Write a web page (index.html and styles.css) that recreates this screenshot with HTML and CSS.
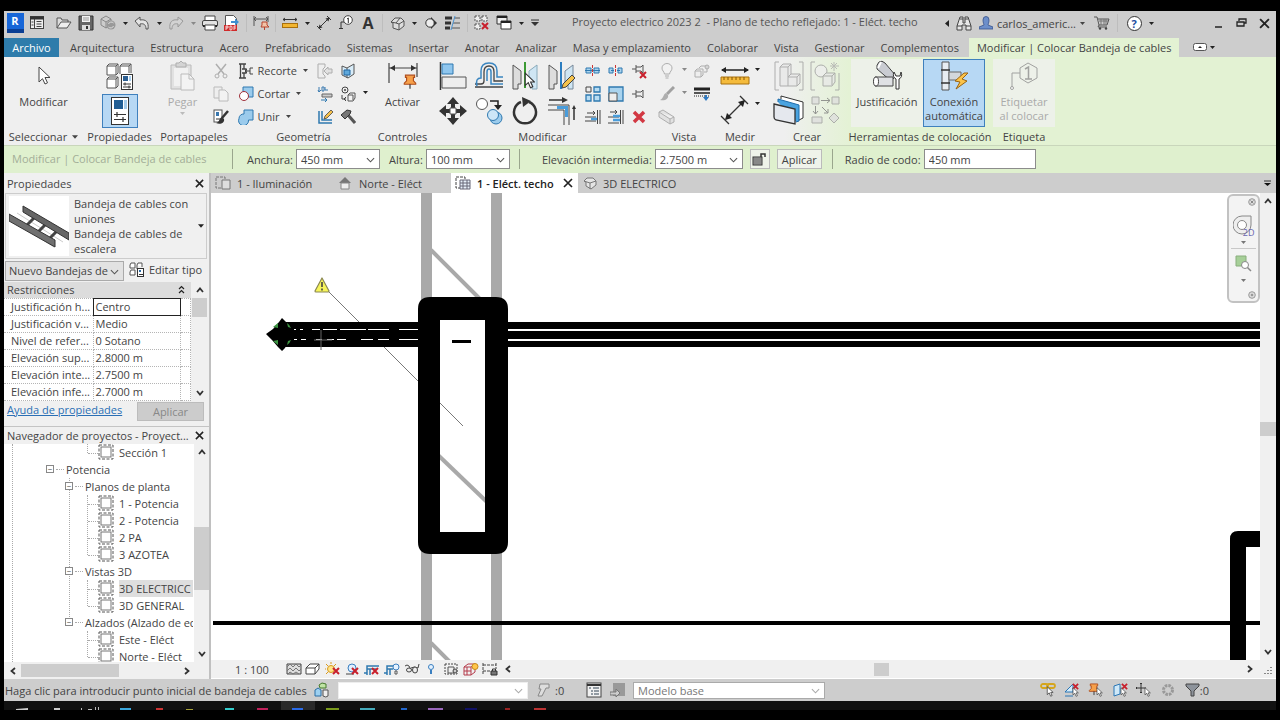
FILE: index.html
```html
<!DOCTYPE html>
<html lang="es">
<head>
<meta charset="utf-8">
<title>Proyecto electrico 2023 2</title>
<link rel="stylesheet" href="styles.css">
</head>
<body>
<svg class="defs" aria-hidden="true">
  <symbol id="caret" viewBox="0 0 7 4"><path d="M0 0h7L3.500 4z" fill="currentColor"/></symbol>
  <symbol id="chev" viewBox="0 0 10 6"><path d="M1 1l4 4 4-4" fill="none" stroke="currentColor" stroke-width="1.200"/></symbol>
  <symbol id="arrow" viewBox="0 0 10 10"><path d="M2 7l3-3.500L8 7" fill="none" stroke="#333" stroke-width="1.800"/></symbol>
  <symbol id="close" viewBox="0 0 10 10"><path d="M1 1l8 8M9 1L1 9" fill="none" stroke="#222" stroke-width="1.700"/></symbol>
  <symbol id="redx" viewBox="0 0 8 8"><path d="M1 1l6 6M7 1L1 7" stroke="#c8202c" stroke-width="2" fill="none"/></symbol>
  <symbol id="cursor" viewBox="0 0 9 14"><path d="M1 1v10l2.500-2.300L5.300 13l1.900-.8-1.800-4H8.500z" fill="#fff" stroke="#333" stroke-width=".9"/></symbol>
  <symbol id="view" viewBox="0 0 16 16"><rect x="1" y="1" width="14" height="14" fill="none" stroke="#555" stroke-dasharray="3 1.500"/><rect x="3" y="3" width="10" height="10" fill="#fff" stroke="#777"/></symbol>
  <symbol id="pin" viewBox="0 0 12 14"><path d="M2 1h8v2H9v3l2 2v1H1V8l2-2V3H2z" fill="#f6a04a" stroke="#b04e1c"/><path d="M6 9v4" stroke="#333"/></symbol>
</svg>
<div class="app">
  <header class="titlebar">
    <nav class="quick" aria-label="Acceso rápido">
      <button class="ib" aria-label="Revit"><span class="logo">R</span></button>
      <button class="ib" aria-label="Inicio"><svg width="14" height="14"><rect x=".5" y=".5" width="13" height="12" fill="#eee" stroke="#444"/><path d="M0 2h14" stroke="#333" stroke-width="3"/><path d="M4.500 3v10M6.500 5.500h5M6.500 8h5M6.500 10.500h5M1.500 6h2M1.500 9h2" stroke="#444"/></svg></button>
      <button class="ib after" aria-label="Abrir"><svg width="16" height="14"><path d="M1 12V2h4l1 2h6v2" fill="#ddd" stroke="#555"/><path d="M1 12l4-6h10l-4 6z" fill="#eee" stroke="#555"/></svg></button>
      <button class="ib" aria-label="Guardar"><svg width="16" height="16"><path d="M1 1h14v14H1z" fill="#666" stroke="#333"/><path d="M4 1h8v6H4z" fill="#f4f4f4"/><path d="M4 10h8v5H4z" fill="#ddd"/><path d="M5 3h6M5 5h6" stroke="#999"/><path d="M9 11v3" stroke="#333" stroke-width="2"/></svg></button>
      <button class="ib" aria-label="Sincronizar"><svg width="17" height="16"><path d="M1 4l5-3 5 3v6l-5 3-5-3zM1 4l5 3 5-3M6 7v6" fill="#ccc" stroke="#888"/><circle cx="11" cy="10" r="4.500" fill="#999"/><path d="M8.500 9a3 3 0 015-1M13.500 11a3 3 0 01-5 1" stroke="#ddd" fill="none"/></svg></button>
      <button class="cb" aria-label="Más"><svg width="5" height="3"><use href="#caret"/></svg></button>
      <button class="ib" aria-label="Deshacer"><svg width="16" height="14"><path d="M1 5l5-4v3c6-1 9 2 8 9h-2c0-4-2-6-6-5v3z" fill="#e4e4e4" stroke="#555"/></svg></button>
      <button class="cb" aria-label="Más"><svg width="5" height="3"><use href="#caret"/></svg></button>
      <button class="ib" aria-label="Rehacer"><svg width="16" height="14"><path d="M15 5l-5-4v3C4 3 1 6 2 13h2c0-4 2-6 6-5v3z" fill="#d2d2d2" stroke="#999"/></svg></button>
      <button class="cb dim" aria-label="Más"><svg width="5" height="3"><use href="#caret"/></svg></button>
      <button class="ib" aria-label="Imprimir"><svg width="16" height="16"><path d="M3 1h10v5H3z" fill="#fff" stroke="#444"/><rect x=".5" y="5.500" width="15" height="6" rx="1.500" fill="#e2e2e2" stroke="#444"/><path d="M1 11h14" stroke="#222" stroke-width="2"/><path d="M3 10h10v5H3z" fill="#fff" stroke="#444"/></svg></button>
      <button class="ib" aria-label="Exportar PDF"><svg width="16" height="16"><path d="M1.500.5h8l3 3v11h-11z" fill="#fff" stroke="#555"/><path d="M7 6h4V3.500L15 7l-4 3.500V8H7z" fill="#3f8fd0"/><path d="M0 10h13v6H0z" fill="#d02a2a"/><path d="M2 15v-4h2v2H2M6 11v4h1.500l.5-1v-2l-.500-1zM10 15v-4h2M10 13h2" stroke="#fff" stroke-width=".8" fill="none"/></svg></button>
      <span class="sep"></span>
      <button class="ib" aria-label="Cota"><svg width="16" height="16"><path d="M1 1v10M15 1v6M1 4h14M3 2L1 4l2 2M13 2l2 2-2 2" stroke="#555" fill="none"/><path d="M9 7h5v3l2 2H8l1-2zM11.500 12v3" fill="#f2c3a8" stroke="#b7422c"/></svg></button>
      <span class="sep"></span>
      <button class="ib" aria-label="Medir"><svg width="16" height="12"><path d="M1 2.500h14M3 1L1 2.500 3 4M13 1l2 1.500L13 4" stroke="#333" fill="none"/><rect x=".5" y="6.500" width="15" height="4" fill="#f2b632" stroke="#a8700e"/></svg></button>
      <button class="cb" aria-label="Más"><svg width="5" height="3"><use href="#caret"/></svg></button>
      <button class="ib" aria-label="Cota alineada"><svg width="16" height="16"><path d="M3 13L13 3M1 11l4 4M11 1l4 4" stroke="#333" fill="none"/><path d="M2.500 13.500l1-4 3 3zM13.500 2.500l-4 1 3 3z" fill="#333"/></svg></button>
      <button class="ib" aria-label="Etiqueta"><svg width="16" height="16"><circle cx="10" cy="5" r="4.300" fill="#fff" stroke="#444"/><path d="M9 4l1.300-1v5M6 7H3v7M1 13.500h4" stroke="#333" fill="none"/></svg></button>
      <button class="ib" aria-label="Texto"><span class="big-a">A</span></button>
      <span class="sep"></span>
      <button class="ib" aria-label="Vista 3D"><svg width="15" height="15"><path d="M1 6l4-4 6 0 3 3v5l-5 4-6-2V7z" fill="#ddd" stroke="#555"/><path d="M1 6l5 1 4-5M6 7l3 1v6M9 8l5-3" fill="none" stroke="#555"/></svg></button>
      <button class="cb" aria-label="Más"><svg width="5" height="3"><use href="#caret"/></svg></button>
      <button class="ib" aria-label="Sección"><svg width="14" height="14"><path d="M7 1l6 6-6 6z" fill="#333"/><circle cx="6" cy="7" r="4.200" fill="#eee" stroke="#333"/></svg></button>
      <button class="ib" aria-label="Líneas finas"><svg width="16" height="14"><path d="M0 2h7M0 7h6M0 12h5" stroke="#333" stroke-width="3"/><path d="M9 2h6M8 7h7M7 12h8" stroke="#555"/><path d="M10 0L6 14" stroke="#4b93d0"/></svg></button>
      <span class="sep"></span>
      <button class="ib" aria-label="Cerrar inactivas"><svg width="16" height="16"><path d="M1 1h5v5H1zM8 1h5v5H8zM1 9h5v5H1z" fill="#eee" stroke="#555" stroke-dasharray="2 1"/><use href="#redx" x="7" y="7" width="8" height="8"/></svg></button>
      <button class="ib" aria-label="Cambiar ventanas"><svg width="16" height="16"><path d="M1 1h10v8H1z" fill="#eee" stroke="#333"/><path d="M1 2h10" stroke="#222" stroke-width="2"/><path d="M5 6h10v8H5z" fill="#fff" stroke="#333"/><path d="M5 7h10" stroke="#222" stroke-width="2"/></svg></button>
      <button class="cb" aria-label="Más"><svg width="5" height="3"><use href="#caret"/></svg></button>
      <button class="wb" aria-label="Personalizar"><svg width="8" height="8"><path d="M0 1h8" stroke="#333"/><path d="M0 3h8L4 7z" fill="#333"/></svg></button>
    </nav>
    <h1 class="title">Proyecto electrico 2023 2 &nbsp;- Plano de techo reflejado: 1 - Eléct. techo</h1>
    <div class="account">
      <button class="cb" aria-label="Contraer"><svg width="4" height="7"><path d="M4 0v7L0 3.500z" fill="#222"/></svg></button>
      <button class="ib" aria-label="Buscar"><svg width="16" height="15"><path d="M4 1h3v6h2V1h3l3 9v4H10V9H6v5H1v-4z" fill="#e8e8e8" stroke="#444"/><path d="M1 10h5M10 10h5M4 3h3M9 3h3" stroke="#444"/></svg></button>
      <button class="user"><svg width="14" height="14"><path d="M4 4a3 3.500 0 016 0c0 3-1 4-1 5l5 2v2H0v-2l5-2c0-1-1-2-1-5z" fill="#6d8fca" stroke="#35508c" stroke-width=".8"/></svg>carlos_americ...<svg width="5" height="3"><use href="#caret"/></svg></button>
      <button class="ib" aria-label="Tienda"><svg width="16" height="14"><path d="M0 1h3l2 8h8l2-6H4M5 9l-1 2h9" fill="none" stroke="#555"/><path d="M5 5h9M7 3v6M10 3v6M12 3v6" stroke="#777"/><circle cx="6" cy="12.500" r="1.200" fill="#444"/><circle cx="12" cy="12.500" r="1.200" fill="#444"/></svg></button>
      <span class="sep help-sep"></span>
      <button class="ib" aria-label="Ayuda"><span class="help">?</span></button>
      <button class="cb" aria-label="Más"><svg width="5" height="3"><use href="#caret"/></svg></button>
    </div>
    <div class="window-buttons">
      <button class="wc" aria-label="Minimizar"><svg width="8" height="11"><path d="M0 9h7" stroke="#222" stroke-width="1.500"/></svg></button>
      <button class="wc" aria-label="Restaurar"><svg width="11" height="10"><path d="M3 3V1h7v4H8M1 4h7v4H1z" fill="none" stroke="#222" stroke-width="1.300"/></svg></button>
      <button class="wc" aria-label="Cerrar"><svg width="11" height="11"><use href="#close"/></svg></button>
    </div>
  </header>

  <nav class="tabs">
    <button class="tab file">Archivo</button><button class="tab">Arquitectura</button><button class="tab">Estructura</button><button class="tab">Acero</button><button class="tab">Prefabricado</button><button class="tab">Sistemas</button><button class="tab">Insertar</button><button class="tab">Anotar</button><button class="tab">Analizar</button><button class="tab">Masa y emplazamiento</button><button class="tab">Colaborar</button><button class="tab">Vista</button><button class="tab">Gestionar</button><button class="tab">Complementos</button><button class="tab context">Modificar | Colocar Bandeja de cables</button>
    <button class="min-ribbon" aria-label="Minimizar cinta"><svg width="24" height="9"><rect x=".5" y=".5" width="13" height="7" rx="2" fill="#fff" stroke="#555"/><path d="M5 5l2-2 2 2z" fill="#222"/><path d="M17 3h5l-2.500 3z" fill="#222"/></svg></button>
  </nav>

  <div class="ribbon">
    <section class="panel">
      <div class="tools"><button class="big"><svg width="22" height="32"><path d="M6 7v15l3.500-3.300L12 24l2.500-1.200L12 17.500h5z" fill="#fff" stroke="#444"/></svg>Modificar</button></div>
      <h2>Seleccionar <svg width="6" height="4"><use href="#caret"/></svg></h2>
    </section>
    <section class="panel">
      <div class="tools two">
        <button class="lg" aria-label="Tipo"><svg width="30" height="30"><path d="M2 4l2-2h9v9l-2 2H2zM2 4h9v9M11 4l2-2M15 4l2-2h9v9M15 12V4h9v7M24 4l2-2M2 17l2-2h9v9l-2 2H2zM2 17h9v9M11 17l2-2" fill="#fff" stroke="#555"/><rect x="16.500" y="12.500" width="11" height="15" fill="#fff" stroke="#333"/><path d="M18 14h5v5h-5z" fill="#2c5f92"/><path d="M24 14h2v5h-2z" fill="#a9d0f0"/><path d="M18 22h8M18 25h8M20 20.500v3M24 23.500v3" stroke="#333"/></svg></button>
        <button class="lg on wide" aria-label="Propiedades"><svg width="20" height="28"><rect x="1.500" y=".5" width="17" height="27" fill="#fff" stroke="#333"/><path d="M4 3h9v9H4z" fill="#1f5d94"/><path d="M14 3h3v9h-3z" fill="#a4cbea"/><path d="M4 17.500h12M4 22.500h12M7 15v5M13 20v5" stroke="#333" stroke-width="1.200"/></svg></button>
      </div>
      <h2>Propiedades</h2>
    </section>
    <section class="panel">
      <div class="tools row">
        <button class="big off"><svg width="28" height="32"><path d="M2 5h20v24H2z" fill="#ddd" stroke="#aaa"/><path d="M5 8h14v18H5z" fill="#f2f2f2"/><path d="M7 3h3l2-2 2 2h3v4H7z" fill="#ccc" stroke="#999"/><path d="M12 14h8l5 5v11H12z" fill="#f5f5f5" stroke="#aaa"/><path d="M20 14v5h5" fill="none" stroke="#aaa"/></svg>Pegar<svg width="5" height="3"><use href="#caret"/></svg></button>
        <div class="col">
          <button class="sm off" aria-label="Cortar"><svg width="16" height="16"><path d="M3 1l8 10M13 1L5 11" stroke="#999" stroke-width="1.500"/><circle cx="4" cy="13" r="2" fill="none" stroke="#999"/><circle cx="12" cy="13" r="2" fill="none" stroke="#999"/></svg></button>
          <button class="sm off" aria-label="Copiar"><svg width="16" height="16"><path d="M1 1h8v11H1z" fill="#eee" stroke="#aaa"/><path d="M6 4h6l3 3v8H6z" fill="#f4f4f4" stroke="#aaa"/></svg></button>
          <button class="sm" aria-label="Igualar tipo"><svg width="16" height="16"><rect x="1" y="1" width="8" height="12" fill="#fff" stroke="#555"/><path d="M3 3h3v4H3z" fill="#3977ae"/><path d="M3 10h5" stroke="#333"/><path d="M15 2L9 9" stroke="#333" stroke-width="2.500"/><path d="M9 8c-3 1-2 5-6 6 4 2 9 0 8-4z" fill="#333"/></svg></button>
        </div>
      </div>
      <h2>Portapapeles</h2>
    </section>
    <section class="panel">
      <div class="tools row">
        <div class="col labels">
          <button class="line"><svg width="16" height="16"><path d="M1 1h7M1 15h7M2.500 1v14M6 1v5M6 10v5M4 6h4v4H4" stroke="#444" fill="none" stroke-width="1.300"/><path d="M15 5h-3v6h3M12 8H7M9 6L7 8l2 2" stroke="#444" fill="none"/></svg>Recorte <svg class="dd" width="5" height="3"><use href="#caret"/></svg></button>
          <button class="line"><svg width="16" height="16"><path d="M5 1h10v10H5z" fill="#9bcbec" stroke="#2f79b0"/><circle cx="6" cy="10" r="4.500" fill="#fff" stroke="#a0303a"/></svg>Cortar <svg class="dd" width="5" height="3"><use href="#caret"/></svg></button>
          <button class="line"><svg width="16" height="16"><path d="M6 1h9v10h-4.500A5 5 0 111 9.500 4.500 4.500 0 016 5z" fill="#9bcbec" stroke="#2f79b0"/></svg>Unir <svg class="dd" width="5" height="3"><use href="#caret"/></svg></button>
        </div>
        <div class="col">
          <button class="sm off" aria-label="Empalme"><svg width="16" height="16"><path d="M1 1h7v3l-2 2v5l2 2v2H1z" fill="#eee" stroke="#999"/><path d="M15 6h-4V4L7 8l4 4v-2h4z" fill="#ddd" stroke="#999"/></svg></button>
          <button class="sm" aria-label="Cubierta"><svg width="16" height="16"><path d="M2 1v5M8 1v3h3M1 4l1 2 2-2M5 1h2v4H5z" stroke="#3b7bb0" fill="none"/><path d="M5 8h10v3H5z" fill="#ccc" stroke="#666"/><path d="M4 14h6M8 12l2 2-2 2" stroke="#2f79b0" fill="none"/></svg></button>
          <button class="sm" aria-label="Uniones"><svg width="16" height="16"><path d="M2 2v12h13M5 2v9h10" stroke="#2f79b0" stroke-width="1.500" fill="none"/><path d="M7 10l1-3 6-6 2 2-6 6z" fill="#f5c04a" stroke="#444" stroke-width=".8"/></svg></button>
        </div>
        <div class="col">
          <button class="sm" aria-label="Cara"><svg width="15" height="16"><path d="M1 3l5 2 7-4v10l-6 4-6-3z" fill="#d8ecf8" stroke="#555"/><path d="M6 5v10" stroke="#555"/><path d="M3 7h6v5H3z" fill="#5ea8dc" stroke="#2267a0"/></svg></button>
          <button class="sm" aria-label="Pintar"><svg width="16" height="16"><circle cx="5" cy="4" r="3" fill="#eee" stroke="#444"/><circle cx="5" cy="4" r="1" fill="#444"/><path d="M2 9v4h4M6 11l-2 2 2 2" stroke="#444" fill="none"/><path d="M8 9l2-2h5v5l-2 3H8zM8 9h5v5" fill="#f4f4f4" stroke="#555"/></svg></button>
          <button class="sm" aria-label="Demoler"><svg width="16" height="16"><path d="M8 6l7 8" stroke="#555" stroke-width="3"/><path d="M1 6l6-5 4 1-1 3-5 5z" fill="#777" stroke="#333"/></svg></button>
        </div>
        <div class="col slim"><span></span><button class="cb" aria-label="Más"><svg width="5" height="3"><use href="#caret"/></svg></button><span></span></div>
      </div>
      <h2>Geometría</h2>
    </section>
    <section class="panel">
      <div class="tools"><button class="big"><svg width="32" height="32"><path d="M2 3v20M30 3v14M2 8h28" stroke="#444" stroke-width="1.200"/><path d="M3 8l5-3v6zM29 8l-5-3v6z" fill="#333"/><use href="#pin" x="16" y="14" width="14" height="16"/></svg>Activar</button></div>
      <h2>Controles</h2>
    </section>
    <section class="panel">
      <div class="tools row">
        <div class="grid4">
          <button class="lg" aria-label="Alinear"><svg width="30" height="30"><path d="M2.500 1v28" stroke="#333" stroke-width="1.500"/><path d="M4 3h11v10H4z" fill="#8fc6ee" stroke="#2f79b0"/><path d="M4 16h24v11H4z" fill="#eee" stroke="#555"/></svg></button>
          <button class="lg" aria-label="Desfasar"><svg width="30" height="30"><path d="M1 26h28M1 23h6q3 0 3-3v-9q0-6 5-6t5 6v9h9" fill="none" stroke="#444" stroke-width="1.300"/><path d="M3 25q-2-8 4-8V10q0-8 8-8t8 8v6h6M29 23H17v-12q0-3-2-3t-2 3v9" fill="none" stroke="#3b86c0" stroke-width="1.500"/></svg></button>
          <button class="lg" aria-label="Simetría eje"><svg width="30" height="30"><path d="M3 4l8 6v13h-3v5H3z" fill="#ddd" stroke="#555"/><path d="M27 4l-8 6v13h3v5h5z" fill="#cfe6f4" stroke="#8ab"/><path d="M15 1v26" stroke="#3c9a34" stroke-width="2"/><use href="#cursor" x="14" y="11" width="11" height="17"/></svg></button>
          <button class="lg" aria-label="Simetría dibujar"><svg width="30" height="30"><path d="M3 4l8 6v13h-3v5H3z" fill="#ddd" stroke="#555"/><path d="M27 4l-8 6v13h3v5h5z" fill="#cfe6f4" stroke="#789"/><path d="M15 1v27" stroke="#2b7dc0" stroke-width="2"/><path d="M16 27l1-4 9-9 3 3-9 9z" fill="#f6c34b" stroke="#444"/></svg></button>
          <button class="lg" aria-label="Desplazar"><svg width="30" height="30"><path d="M15 1l6 7h-4v4h-4V8H9zM15 29l6-7h-4v-4h-4v4H9zM1 15l7-6v4h4v4H8v4zM29 15l-7-6v4h-4v4h4v4z" fill="#333"/><path d="M12 12h6v6h-6z" fill="#fff" stroke="#555"/></svg></button>
          <button class="lg" aria-label="Copiar"><svg width="30" height="30"><circle cx="8" cy="8" r="5.500" fill="#fff" stroke="#555"/><path d="M16 5h8v5" fill="none" stroke="#222" stroke-width="1.500"/><path d="M20 9h8l-4 5z" fill="#222"/><circle cx="22" cy="22" r="6" fill="#9bcbec" stroke="#2f79b0"/><circle cx="19" cy="19" r="5.500" fill="#cde6f7" stroke="#2f79b0"/></svg></button>
          <button class="lg" aria-label="Rotar"><svg width="30" height="30"><path d="M19 6a11 11 0 11-8 0" fill="none" stroke="#333" stroke-width="2.500"/><path d="M12 1l9 4-8 6z" fill="#333"/></svg></button>
          <button class="lg" aria-label="Recortar"><svg width="30" height="30"><path d="M3 4h16" stroke="#333" stroke-width="1.500"/><path d="M16 1l6 3-6 3zM28 9l2 4h-4z" fill="#333"/><path d="M2 9h21v20M2 14h16v15" stroke="#444" fill="none"/><path d="M11 11.500h9.500V21" stroke="#4a9ddb" stroke-width="3" fill="none"/><path d="M28 12v12" stroke="#333" stroke-width="1.500"/></svg></button>
        </div>
        <div class="col">
          <button class="sm" aria-label="Dividir"><svg width="16" height="16"><path d="M1 5h5v5H1zM9 5h5v5H9z" fill="#a9d3ee" stroke="#2f79b0"/><path d="M0 7.500h15" stroke="#2f79b0"/><path d="M7.500 2v12" stroke="#c33" stroke-dasharray="3 1"/></svg></button>
          <button class="sm" aria-label="Matriz"><svg width="16" height="16"><path d="M1 1h5v5H1z" fill="#eee" stroke="#444"/><path d="M9 1h6v5H9zM1 9h5v6H1zM9 9h6v6H9z" fill="#b7dcf3" stroke="#2f79b0" stroke-width="1.300"/></svg></button>
          <button class="sm" aria-label="Extender"><svg width="16" height="16"><path d="M2 4h8M8 2l2 2-2 2M0 8h11M0 12h11M12.500 1v14M15 1v14" stroke="#444" fill="none"/><path d="M6 10h6" stroke="#4a9ddb" stroke-width="2.500"/></svg></button>
        </div>
        <div class="col">
          <button class="sm" aria-label="Dividir con separación"><svg width="16" height="16"><path d="M1 5h4v5H1zM10 5h4v5h-4z" fill="#a9d3ee" stroke="#2f79b0"/><path d="M3 7.500h3M9 7.500h3" stroke="#2f79b0"/><path d="M7.500 2v12" stroke="#c33" stroke-dasharray="3 1"/></svg></button>
          <button class="sm" aria-label="Escala"><svg width="16" height="16"><path d="M1 1h14v14H1z" fill="#a9d3ee" stroke="#2f79b0" stroke-width="1.300"/><path d="M1 7h8v8H1z" fill="#eee" stroke="#555"/></svg></button>
          <button class="sm" aria-label="Extender varios"><svg width="16" height="16"><path d="M2 3h7M7 1l2 2-2 2M0 8h11M0 14h11M12.500 1v14M15 1v14" stroke="#444" fill="none"/><path d="M5 7h7M5 11h7" stroke="#4a9ddb" stroke-width="2.500"/></svg></button>
        </div>
        <div class="col">
          <button class="sm" aria-label="Desbloquear"><svg width="16" height="16"><path d="M1 6h4M5 2v8M5 4h5l2-2v8l-2-2H5" fill="#eee" stroke="#555"/><use href="#redx" x="8" y="8" width="8" height="8"/></svg></button>
          <button class="sm" aria-label="Bloquear"><svg width="16" height="16"><path d="M1 8h4M5 4v8M5 6h5l2-2v8l-2-2H5" fill="#eee" stroke="#555"/></svg></button>
          <button class="sm" aria-label="Suprimir"><svg width="14" height="14"><path d="M2 2l10 10M12 2L2 12" stroke="#d23843" stroke-width="3.500"/></svg></button>
        </div>
      </div>
      <h2>Modificar</h2>
    </section>
    <section class="panel">
      <div class="tools row">
        <div class="col">
          <button class="sm off" aria-label="Ocultar"><svg width="16" height="16"><path d="M5.500 11C5 8 3 8 3 5a5 4.500 0 0110 0c0 3-2 3-2.500 6zM6 13h4M6.500 15h3" fill="#f4f4f4" stroke="#999"/></svg></button>
          <button class="sm off" aria-label="Modificar gráficos"><svg width="16" height="16"><path d="M15 1L8 8" stroke="#888" stroke-width="3"/><path d="M7 7c-3 1-2 5-6 7 5 1 9-1 8-5z" fill="#999"/></svg></button>
          <button class="sm off" aria-label="Caja de sección"><svg width="17" height="16"><path d="M1 3l4-2 11 7v5l-4 2L1 8zM1 3l11 7 4-2M12 10v5" fill="#ddd" stroke="#999"/></svg></button>
        </div>
        <div class="col slim off"><button class="cb" aria-label="Más"><svg width="5" height="3"><use href="#caret"/></svg></button><button class="cb" aria-label="Más"><svg width="5" height="3"><use href="#caret"/></svg></button><span></span></div>
        <div class="col">
          <button class="sm off" aria-label="Aislar"><svg width="16" height="16"><path d="M1 8l2-2h6v6l-2 2H1zM1 8h6v6M5 5l2-2h6v6h-3" fill="#eee" stroke="#999"/><circle cx="13" cy="4" r="2" fill="#ccc" stroke="#999"/></svg></button>
          <button class="sm" aria-label="Trabajo de línea"><svg width="16" height="14"><path d="M0 2h16" stroke="#222" stroke-width="3"/><path d="M0 6h16" stroke="#222" stroke-width="1.500"/><path d="M0 9h16" stroke="#222" stroke-dasharray="1 1"/><path d="M11 8h2v2h2l-3 4-3-4h2z" fill="#2f79c0"/></svg></button><span></span>
        </div>
      </div>
      <h2>Vista</h2>
    </section>
    <section class="panel">
      <div class="tools pairs">
        <button class="lg" aria-label="Medir"><svg width="30" height="24"><path d="M2 6h26" stroke="#222" stroke-width="1.500"/><path d="M1 6l5-3v6zM29 6l-5-3v6z" fill="#222"/><path d="M1 13h28v7H1z" fill="#f5bb3c" stroke="#a8700e"/><path d="M4 13v3M8 13v3M12 13v3M16 13v3M20 13v3M24 13v3" stroke="#875600"/></svg></button><button class="cb" aria-label="Más"><svg width="5" height="3"><use href="#caret"/></svg></button>
        <button class="lg" aria-label="Cota"><svg width="30" height="30"><path d="M6 24L24 6M1 21l8 8M20 1l8 8" stroke="#333" stroke-width="1.300"/><path d="M5 25l2-7 5 5zM25 5l-7 2 5 5z" fill="#222"/></svg></button><button class="cb" aria-label="Más"><svg width="5" height="3"><use href="#caret"/></svg></button>
      </div>
      <h2>Medir</h2>
    </section>
    <section class="panel">
      <div class="tools grid2">
        <button class="lg off" aria-label="Crear grupo"><svg width="30" height="30"><path d="M5 1H1v28h4M25 1h4v28h-4" stroke="#999" fill="none"/><path d="M6 6l3-3h8v10h9v9l-3 3H6zM6 6h8v19M14 6l3-3M14 16l3-3M14 16h9v9M23 16l3-3" fill="#e8e8e8" stroke="#999"/></svg></button>
        <button class="lg off" aria-label="Crear similar"><svg width="30" height="30"><path d="M5 1H1v28h4M25 29h4V12" stroke="#999" fill="none"/><circle cx="11" cy="10" r="6" fill="#eee" stroke="#999"/><path d="M13 15l3-3h9v9l-3 4h-9zM13 15h9v9M22 15l3-3" fill="#e8e8e8" stroke="#999"/><path d="M24 1v9M20 5h9M21 2l6 6M27 2l-6 6" stroke="#aaa"/></svg></button>
        <button class="lg" aria-label="Crear conjunto"><svg width="32" height="30"><path d="M8 4V1l22 6v16l-4 2" fill="#fff" stroke="#333"/><path d="M5 7V4l21 6v16l-3 1" fill="#4aa3e0" stroke="#1f6cab"/><path d="M1 9l21 5v15L3 25q-2-1-2-3z" fill="#e5e8ee" stroke="#333" stroke-width="1.300"/></svg></button>
        <button class="lg off" aria-label="Crear piezas"><svg width="30" height="30"><path d="M2 2h7v7H2zM22 2h7v7h-7zM2 22h10v6H2zM24 18l5 5-5 5-5-5z" fill="#ddd" stroke="#999"/><path d="M11 5.500h9M17 3l3 2.500L17 8M5.500 11v8M3 16l2.500 3L8 16M12 12l6 6M18 14v4h-4" stroke="#777" fill="none"/></svg></button>
      </div>
      <h2>Crear</h2>
    </section>
    <section class="panel green">
      <div class="tools row">
        <button class="big pale"><svg width="32" height="32"><path d="M8 2q3-2 6 1l11 13-5 5L6 9q-1-4 2-7z" fill="#c9ccd2" stroke="#444"/><path d="M10 2L7 8" stroke="#fff" stroke-width="2"/><path d="M4 17q-3 4 0 9h18v-9z" fill="#dfe1e4" stroke="#444"/><ellipse cx="5" cy="21.500" rx="2.500" ry="4.500" fill="#fff" stroke="#444"/><path d="M23 12q-2 5 2 7v10h3V19q4-2 2-7l-1 4h-4z" fill="#fff" stroke="#333"/></svg>Justificación</button>
        <button class="big on"><svg width="32" height="32"><path d="M4 2h7v28H4z" fill="#e8edf2" stroke="#555"/><path d="M11 12h12v8H11z" fill="#d2d7dd" stroke="#666"/><path d="M3 10h9M3 23h9" stroke="#333" stroke-width="1.500"/><path d="M26 13l-9 8 5 1-4 7 11-8-5-2 6-6z" fill="#fbc34a" stroke="#9a6512"/></svg>Conexión automática</button>
      </div>
      <h2>Herramientas de colocación</h2>
    </section>
    <section class="panel green">
      <div class="tools"><button class="big off pale"><svg width="32" height="32"><path d="M12 8l8-5 9 5v10l-9 5-8-5zM12 13H4v15" fill="none" stroke="#888"/><circle cx="4" cy="28" r="1.500" fill="#fff" stroke="#888"/><path d="M17 9l3.500-2v12M17 19h7" fill="none" stroke="#888" stroke-width="1.500"/></svg><span>Etiquetar<br>al colocar</span></button></div>
      <h2>Etiqueta</h2>
    </section>
  </div>

  <div class="options">
    <span class="mode">Modificar | Colocar Bandeja de cables</span>
    <label for="w">Anchura:</label><span class="pick w84"><select id="w"><option>450 mm</option></select><svg width="9" height="6"><use href="#chev"/></svg></span>
    <label class="h" for="h">Altura:</label><span class="pick w84"><select id="h"><option>100 mm</option></select><svg width="9" height="6"><use href="#chev"/></svg></span>
    <span class="rule"></span>
    <label for="e">Elevación intermedia:</label><span class="pick w92"><select id="e"><option>2.7500 m</option></select><svg width="9" height="6"><use href="#chev"/></svg></span>
    <button class="obtn lock" aria-label="Bloquear elevación"><svg width="15" height="16"><rect x="1" y="6" width="9" height="8" fill="#aaa" stroke="#333"/><path d="M1 8h9M1 10h9M1 12h9" stroke="#666"/><path d="M9 6V3h4v3" fill="none" stroke="#333" stroke-width="1.500"/></svg></button>
    <button class="obtn apply">Aplicar</button>
    <span class="rule short"></span>
    <label for="r">Radio de codo:</label><input id="r" value="450 mm">
  </div>

  <main class="work">
    <aside class="side">
      <div class="phead"><h3>Propiedades</h3><button class="x" aria-label="Cerrar"><svg width="9" height="9"><use href="#close"/></svg></button></div>
      <button class="type">
        <svg width="60" height="60"><path fill="#fff" d="M0 0h60v60H0z"/><path d="M8 17l46 29M3 24l42 27" stroke="#ccc"/><path d="M28 19l-11 11M39 26l-11 11M50 33L39 44" stroke="#444" stroke-width="3"/><path d="M14 10l46 27v7L14 16z" fill="#666" stroke="#333"/><path d="M0 18l46 26v7L0 25z" fill="#707070" stroke="#333"/></svg>
        <span>Bandeja de cables con uniones<br>Bandeja de cables de escalera</span>
        <svg class="c" width="6" height="4"><use href="#caret"/></svg>
      </button>
      <div class="edit"><span class="pick gray"><select aria-label="Filtro"><option>Nuevo Bandejas de</option></select><svg width="9" height="6"><use href="#chev"/></svg></span>
        <button class="edit-type"><svg width="16" height="16"><path d="M1 3l1-2h4v5H1zM8 3l1-2h4v4M1 10l1-2h4v5H1zM8 3v4" fill="#fff" stroke="#555"/><rect x="8.500" y="6.500" width="6" height="8" fill="#fff" stroke="#333"/><path d="M10 8h2v2h-2z" fill="#2b6ca8"/><path d="M10 12.500h4" stroke="#333"/></svg>Editar tipo</button></div>
      <div class="props">
        <table>
          <colgroup><col class="c-name"><col class="c-value"><col></colgroup>
          <thead><tr><th colspan="3">Restricciones<svg width="7" height="9"><path d="M1 4l2.500-2.500L6 4M1 8l2.500-2.500L6 8" fill="none" stroke="#222" stroke-width="1.200"/></svg></th></tr></thead>
          <tbody>
            <tr><td>Justificación h...</td><td class="cur">Centro</td><td></td></tr>
            <tr><td>Justificación v...</td><td>Medio</td><td></td></tr>
            <tr><td>Nivel de refer...</td><td>0 Sotano</td><td></td></tr>
            <tr><td>Elevación sup...</td><td>2.8000 m</td><td></td></tr>
            <tr><td>Elevación inte...</td><td>2.7500 m</td><td></td></tr>
            <tr><td>Elevación infe...</td><td>2.7000 m</td><td></td></tr>
          </tbody>
        </table>
        <div class="vs"><svg width="10" height="10"><use href="#arrow"/></svg><i class="t1"></i><svg class="down" width="10" height="10"><use href="#arrow"/></svg></div>
      </div>
      <div class="foot"><a href="#ayuda">Ayuda de propiedades</a><button disabled>Aplicar</button></div>
      <div class="phead nav"><h3>Navegador de proyectos - Proyect...</h3><button class="x" aria-label="Cerrar"><svg width="9" height="9"><use href="#close"/></svg></button></div>
      <div class="browser">
        <div class="tree">
          <ul class="leafs first"><li><svg width="16" height="16"><use href="#view"/></svg>Sección 1</li></ul>
          <div class="node n1"><i>−</i>Potencia</div>
          <div class="groups">
            <div class="node n2"><i>−</i>Planos de planta</div>
            <ul class="leafs"><li><svg width="16" height="16"><use href="#view"/></svg>1 - Potencia</li><li><svg width="16" height="16"><use href="#view"/></svg>2 - Potencia</li><li><svg width="16" height="16"><use href="#view"/></svg>2 PA</li><li><svg width="16" height="16"><use href="#view"/></svg>3 AZOTEA</li></ul>
            <div class="node n2"><i>−</i>Vistas 3D</div>
            <ul class="leafs"><li><svg width="16" height="16"><use href="#view"/></svg><b>3D ELECTRICC</b></li><li><svg width="16" height="16"><use href="#view"/></svg>3D GENERAL</li></ul>
            <div class="node n2"><i>−</i>Alzados (Alzado de ec</div>
            <ul class="leafs"><li><svg width="16" height="16"><use href="#view"/></svg>Este - Eléct</li><li><svg width="16" height="16"><use href="#view"/></svg>Norte - Eléct</li></ul>
          </div>
        </div>
        <div class="vs"><svg width="10" height="10"><use href="#arrow"/></svg><i class="t2"></i><svg class="down" width="10" height="10"><use href="#arrow"/></svg></div>
      </div>
      <div class="hs"><svg class="left" width="10" height="10"><use href="#arrow"/></svg><i></i><svg class="right" width="10" height="10"><use href="#arrow"/></svg></div>
    </aside>

    <section class="views">
      <nav class="vtabs">
        <button class="vtab"><svg width="16" height="14"><path d="M1 1h9v11H1z" fill="none" stroke="#777" stroke-dasharray="3 1"/><path d="M7 4h8v9H7z" fill="#ddd" stroke="#777"/></svg>1 - Iluminación</button>
        <button class="vtab two"><svg width="14" height="14"><path d="M7 1l6 6H1z" fill="#777"/><path d="M3 7h8v6H3z" fill="#eee" stroke="#888"/></svg>Norte - Eléct</button>
        <button class="vtab active"><svg width="16" height="14"><path d="M1 1h9v11H1z" fill="#fff" stroke="#444" stroke-dasharray="3 1"/><path d="M5 4h10v9H5zM5 7h10M5 10h10M8 4v9M12 4v9" fill="#e7f1fa" stroke="#667"/></svg>1 - Eléct. techo<svg class="xx" width="10" height="10"><use href="#close"/></svg></button>
        <button class="vtab four"><svg width="14" height="14"><path d="M1 5l3-3h6l3 3v4l-5 4-5-3V6z" fill="#e4e4e4" stroke="#777"/><path d="M1 5l6 2 6-2M7 7v6" fill="none" stroke="#777"/></svg>3D ELECTRICO</button>
        <button class="more" aria-label="Lista de vistas"><svg width="8" height="7"><path d="M0 1h7" stroke="#333"/><path d="M0 3h7L3.500 6z" fill="#111"/></svg></button>
      </nav>
      <div class="stage">
        <div class="canvas">
          <svg class="drawing" role="img" aria-label="Plano de techo">
            <g transform="translate(-211 -193)">
              <path d="M421 193h11v107h-11zM491 193h11v107h-11zM421 550h11v900h-11zM491 550h11v900h-11z" fill="#a9a9a9"/>
              <path d="M431 250l49 49M431 643l30 30" stroke="#a9a9a9" stroke-width="4"/>
              <path d="M328 291l100 100" stroke="#555" stroke-width=".8"/>
              <path d="M285 322h2000v7H285zM285 331h2000v8H285zM285 341h2000v6H285z"/>
              <path d="M285 322h133v7H285zM285 330h133v9H285zM285 340h133v7H285z"/>
              <path d="M285 328h9v13h-9zM296 328h4v4h-4zM303 329h9v3h-9zM320 328h3v4h-3zM337 328h3v4h-3zM366 328h2v4h-2zM389 327h10v16h-10zM297 338h4v4h-4zM306 338h10v4h-10zM322 338h5v4h-5zM334 338h3v4h-3zM346 338h15v2h-15zM373 338h5v2h-5z"/>
              <path d="M266 334l7-5 6-7 3-4 4 4 2 4v16l-3 6-3 3-4-4-6-7z"/>
              <path d="M273 327l5-4v5zM273 341l5 4v-5zM287 323q3 2 4 5l-3-1zM287 345q3-2 4-5l-3 1z" fill="#3c9442"/>
              <path d="M321 330v20M314 340h18" stroke="#666"/>
              <path d="M438 318h49v216h-49z" fill="#fff"/>
              <path d="M438 455l50 48" stroke="#a9a9a9" stroke-width="4"/>
              <path d="M438 401l25 25" stroke="#555" stroke-width=".8"/>
              <path d="M430 297h66q12 0 12 12v233q0 12-12 12h-66q-12 0-12-12V309q0-12 12-12zM440 320v212h45V320z" fill-rule="evenodd"/>
              <path d="M452 340h19v3h-19z"/>
              <path d="M213 621h2000v4H213z"/>
              <path d="M1238 531h900v16h-892v1000h-16V539q0-8 8-8z"/>
              <path d="M322 278l7 13q0 1-1 1h-12q-1 0-1-1z" fill="#f6f45a" stroke="#8a8750" stroke-width="1.200" stroke-linejoin="round"/>
              <path d="M322 282v5M322 288.500v2" stroke="#444" stroke-width="1.600"/>
            </g>
          </svg>
          <div class="navbar">
            <svg class="nx" width="8" height="8"><circle cx="4" cy="4" r="3.300" fill="#ddd" stroke="#999"/><path d="M2.500 2.500l3 3M5.500 2.500l-3 3" stroke="#888"/></svg>
            <button class="wheel" aria-label="Rueda 2D"><svg width="22" height="22"><path d="M9 1h9v9a9 9 0 11-9-9z" fill="#eee" stroke="#888"/><circle cx="9" cy="10" r="4.500" fill="#fff" stroke="#888"/></svg><span>2D</span></button>
            <svg class="nc" width="5" height="3"><use href="#caret"/></svg>
            <button class="zoom" aria-label="Zoom"><svg width="17" height="17"><path d="M1 1h10v10H1z" fill="#a6cf98" stroke="#88ad7c"/><circle cx="10" cy="10" r="3.500" fill="#fff" stroke="#888"/><path d="M12.500 12.500L16 16" stroke="#888" stroke-width="1.500"/></svg></button>
            <svg class="nc" width="5" height="3"><use href="#caret"/></svg>
            <svg class="nx end" width="8" height="8"><circle cx="4" cy="4" r="3.300" fill="#ddd" stroke="#999"/><circle cx="4" cy="4" r="1.300" fill="#999"/></svg>
          </div>
        </div>
        <div class="vs wide"><svg width="10" height="10"><use href="#arrow"/></svg><i class="t3"></i><svg class="down" width="10" height="10"><use href="#arrow"/></svg></div>
      </div>
      <div class="viewbar">
        <button class="scale">1 : 100</button>
        <div class="vicons">
          <button class="ib" aria-label="Detalle"><svg width="16" height="14"><path d="M1 2h14v10H1z" fill="#ddd" stroke="#444"/><path d="M1 5l3-3 3 3 3-3 3 3 2-2M1 9l3-3 3 3 3-3 3 3 2-2M2 12l2-2 3 2 3-2 3 2" fill="none" stroke="#777"/></svg></button>
          <button class="ib" aria-label="Estilo visual"><svg width="16" height="14"><path d="M1 6l4-4h9v5l-4 5H1zM1 6h9v6M10 6l4-4" fill="#fff" stroke="#444"/></svg></button>
          <button class="ib" aria-label="Sol"><svg width="16" height="14"><circle cx="6" cy="7" r="3.500" fill="#ffe48a" stroke="#d99a1c"/><path d="M6 0v2M0 7h1M1 2l2 2M11 2L9 4M1 12l2-2" stroke="#d99a1c"/><use href="#redx" x="7" y="5" width="8" height="8"/></svg></button>
          <button class="ib" aria-label="Sombras"><svg width="16" height="14"><circle cx="7" cy="6" r="4" fill="#dfefff" stroke="#3a7fc0"/><path d="M1 12h8" stroke="#444"/><use href="#redx" x="6" y="5" width="8" height="8"/></svg></button>
          <button class="ib" aria-label="Recorte"><svg width="16" height="14"><path d="M0 11h3M3 13V4h12M3 7h9M6 7v6" stroke="#2f79b0" stroke-width="1.500" fill="none"/><use href="#redx" x="7" y="5" width="8" height="8"/></svg></button>
          <button class="ib" aria-label="Región"><svg width="16" height="14"><path d="M0 11h3M3 13V4h7M3 7h6M6 7v6" stroke="#2f79b0" stroke-width="1.500" fill="none"/><circle cx="12" cy="5" r="3" fill="#e5f2ff" stroke="#3a7fc0"/><path d="M11 9h2v3h-2z" stroke="#555" fill="#fff"/></svg></button>
          <button class="ib" aria-label="Ocultar temporal"><svg width="16" height="12"><path d="M1 3q2-2 4 0l2 4M7 5q3-2 7 0M14 5l1-4" fill="none" stroke="#444"/><ellipse cx="5" cy="7" rx="2.500" ry="2" fill="#eee" stroke="#444"/><ellipse cx="11" cy="7" rx="2.500" ry="3" fill="#eee" stroke="#444"/></svg></button>
          <button class="ib" aria-label="Mostrar ocultos"><svg width="8" height="12"><circle cx="4" cy="4" r="2.500" fill="#e5f2ff" stroke="#3a7fc0"/><path d="M3 7h2v4H3z" fill="#3a7fc0"/></svg></button>
          <button class="ib" aria-label="Plantilla"><svg width="14" height="14"><path d="M1 2h12v10H1z" fill="none" stroke="#444" stroke-dasharray="2 1"/><path d="M4 5h6v6H4z" fill="#eee" stroke="#555"/><circle cx="11" cy="9" r="2" fill="#ccc" stroke="#444"/></svg></button>
          <button class="ib" aria-label="Modelo analítico"><svg width="16" height="14"><path d="M1 5l4-3h7v8l-4 3H1zM1 5h7v8M4 5v8M1 9h7M8 5l4-3" fill="none" stroke="#b43a4a"/><circle cx="12" cy="4.500" r="3" fill="#ffc64a" stroke="#c98a1a"/></svg></button>
          <button class="ib" aria-label="Restricciones"><svg width="16" height="14"><path d="M1 1v12M14 1v6M1 3h13M1 9h7" stroke="#444" stroke-dasharray="3 1"/><path d="M9 9h6v4H9z" fill="#777" stroke="#333"/><path d="M10.500 9V7h3v2" fill="none" stroke="#333"/></svg></button>
        </div>
        <div class="hs grow"><svg class="left" width="10" height="10"><use href="#arrow"/></svg><i></i><svg class="right" width="10" height="10"><use href="#arrow"/></svg></div>
        <svg class="grip" width="10" height="10"><path d="M7 1h2v1H7zM4 4h2v1H4zM7 4h2v1H7zM1 7h2v1H1zM4 7h2v1H4zM7 7h2v1H7z" fill="#888"/></svg>
      </div>
    </section>
  </main>

  <footer class="status">
    <span class="hint">Haga clic para introducir punto inicial de bandeja de cables</span>
    <svg class="ws" width="16" height="16"><path d="M1 8l3-2 3 2v6H1z" fill="#9dd0f0" stroke="#2b6fa5"/><path d="M5 3l3-2 4 1v4H6z" fill="#bfe3a4" stroke="#477a2e"/><path d="M9 8h5v6q-2 2-5 0z" fill="#eee" stroke="#555"/></svg>
    <span class="pick s1"><select aria-label="Subproyecto"><option></option></select><svg width="9" height="6"><use href="#chev"/></svg></span>
    <span class="edits"><svg width="14" height="14"><path d="M3 1h9v4H9L5 13H1l3-7H2z" fill="#ddd" stroke="#888"/></svg>:0</span>
    <button class="ib" aria-label="Opciones de diseño"><svg width="16" height="16"><rect x="1" y="1" width="14" height="14" fill="#f1f1f1" stroke="#444"/><path d="M1 3h14" stroke="#333" stroke-width="2"/><path d="M3 6h2M7 6h6M5 9h2M8 9h5M5 12h2M8 12h5" stroke="#345"/></svg></button>
    <button class="ib" aria-label="Añadir"><svg width="16" height="16"><path d="M3 1h12v13H3z" fill="#999"/><path d="M0 10h6V7l4 4-4 4v-2H0z" fill="#ccc" stroke="#777"/></svg></button>
    <span class="pick s2"><select aria-label="Modelo"><option>Modelo base</option></select><svg width="9" height="6"><use href="#chev"/></svg></span>
    <div class="sel">
      <button class="ib" aria-label="Vínculos"><svg width="16" height="16"><rect x="1" y="2" width="7" height="4" rx="2" fill="none" stroke="#d5a51c" stroke-width="1.800"/><rect x="7" y="2" width="8" height="4" rx="2" fill="none" stroke="#d5a51c" stroke-width="1.800"/><use href="#cursor" x="6" y="4" width="8" height="11"/></svg></button>
      <button class="ib" aria-label="Subyacentes"><svg width="16" height="16"><path d="M1 10L9 2v8zM1 14h8" fill="#d5ecfa" stroke="#2b76b5"/><use href="#redx" x="8" y="1" width="7" height="7"/><use href="#cursor" x="8" y="5" width="7" height="10"/></svg></button>
      <button class="ib" aria-label="Bloqueados"><svg width="16" height="16"><use href="#pin" x="0" y="1" width="12" height="13"/><use href="#cursor" x="8" y="5" width="7" height="10"/></svg></button>
      <button class="ib" aria-label="Por cara"><svg width="16" height="16"><path d="M2 4l6-2v10l-6 2z" fill="#cfe8f8" stroke="#2b76b5"/><use href="#redx" x="9" y="1" width="7" height="7"/><use href="#cursor" x="8" y="5" width="7" height="10"/></svg></button>
      <button class="ib" aria-label="Arrastrar"><svg width="16" height="16"><path d="M5 1v10M0 6h10M4 2l1-1 1 1M4 10l1 1 1-1M1 5L0 6l1 1" stroke="#333" fill="none"/><use href="#cursor" x="8" y="5" width="7" height="10"/></svg></button>
      <button class="ib" aria-label="Procesos"><svg width="14" height="14"><circle cx="7" cy="7" r="4.500" fill="none" stroke="#999" stroke-width="3" stroke-dasharray="2.500 1"/></svg></button>
      <button class="filter"><svg width="15" height="14"><path d="M1 1h13v2L9 8v5H6V8L1 3z" fill="#8d939b" stroke="#444"/></svg>:0</button>
    </div>
  </footer>
  <div class="taskbar" aria-hidden="true"><svg width="560" height="9"><path fill="#2a2a2a" d="M277 0h34v9h-34z"/><path d="M12 8l12-1v2H12zM50 7h6v2h-6z" fill="#ccc"/><path d="M77 7h1v2h-1zM84 8h4v1h-4zM91 6h1v3h-1zM94 6h1v3h-1z" fill="#bbb"/><path d="M116 7h11v2h-11z" fill="#3aa6dc"/><path d="M152 7h7v2h-7z" fill="#c33"/><path d="M182 8h7v1h-7z" fill="#a8a23a"/><path d="M221 7h9v2h-9z" fill="#3cc"/><path d="M253 7h11v2h-11z" fill="#c0205a"/><path d="M288 7h11v2h-11z" fill="#2a6be8"/><path d="M322 7h13v2h-13z" fill="#7a9a1c"/><path d="M356 7h15v2h-15z" fill="#4ab"/><path d="M397 7h6v2h-6z" fill="#26c"/><path d="M424 7h15v2h-15z" fill="#96b"/><path d="M461 7h12v2h-12z" fill="#116"/><path d="M501 7h5v2h-5z" fill="#922"/><path d="M530 7h12v2h-12z" fill="#b33"/></svg></div>
</div>
</body>
</html>
```
FILE: styles.css
```css
* { box-sizing: border-box; }
html, body { height: 100%; margin: 0; }
body { background: #000; padding: 11px 4px 10px; font: 11px/15px "Open Sans", "Noto Sans", sans-serif; color: #444; overflow: hidden; }
button, select, input { font: inherit; color: inherit; margin: 0; }
button { background: none; border: 0; padding: 0; white-space: nowrap; }
h1, h2, h3, ul { margin: 0; padding: 0; font: inherit; list-style: none; }
svg { flex: none; display: block; }
.defs { position: absolute; width: 0; height: 0; }
.app { display: flex; flex-direction: column; height: 100%; background: #cdcdcd; overflow: hidden; }

.titlebar { display: flex; height: 27px; flex: none; align-items: center; padding-bottom: 3px; }
.quick, .account, .window-buttons, .sel { display: flex; align-items: center; }
.ib { width: 22px; height: 20px; display: grid; place-items: center; flex: none; }
.ib.after { margin-left: 5px; }
.cb { width: 12px; height: 20px; display: grid; place-items: center; color: #222; flex: none; }
.cb.dim { color: #888; }
.wb { width: 16px; display: grid; place-items: center; }
.sep { width: 1px; height: 18px; margin: 0 3px; background: #bdbdbd; }
.logo { width: 17px; height: 20px; background: #1766d8; border-bottom: 4px solid #0b3f94; color: #fff; font-weight: 700; line-height: 16px; }
.big-a { font-size: 16px; font-weight: 700; color: #333; line-height: 18px; }
.title { margin-left: 29px; padding-bottom: 4px; white-space: nowrap; color: #555; }
.account { margin-left: auto; margin-right: 50px; }
.user { display: flex; align-items: center; gap: 4px; padding: 0 6px 0 4px; }
.help { width: 15px; height: 15px; border: 1px solid #333; border-radius: 50%; background: #fff; color: #1f4fa0; font-weight: 700; line-height: 13px; }
.help-sep { margin: 0 5px 0 4px; }
.wc { width: 23px; height: 20px; display: grid; place-items: center; }

.tabs { display: flex; height: 19px; flex: none; align-items: stretch; }
.tab { padding: 0 8px; flex: none; }
.tab.file { background: #2e7cab; color: #fff; width: 55px; margin-right: 3px; }
.tab.context { background: #e3f2d3; margin-left: 2px; }
.min-ribbon { margin-left: 14px; }

.ribbon { display: grid; flex: none; grid-template-columns: 79px 73px 76px 143px 55px 225px 58px 54px 80px 146px 62px; background: linear-gradient(90deg, #efefef 780px, #e3f2d3 850px); border-bottom: 1px solid #c9d6bb; height: 89px; padding-top: 2px; }
.panel { display: flex; flex-direction: column; align-items: center; }
.panel h2 { display: flex; align-items: center; gap: 5px; white-space: nowrap; }
.tools { height: 70px; width: 100%; display: flex; justify-content: center; }
.tools.two { flex-direction: column; align-items: center; }
.big { display: flex; flex-direction: column; align-items: center; padding-top: 1px; line-height: 14px; white-space: normal; width: 62px; height: 68px; gap: 3px; flex: none; }
.on { background: #b7d8f4; border: 1px solid #3f80bd; padding-top: 0; }
.pale { background: #edf1e9; }
.off { color: #aaa; }
.off > svg { opacity: .75; }
.lg { width: 36px; height: 34px; display: grid; place-items: center; }
.col { display: grid; grid-template-rows: repeat(3, 23px); width: 23px; flex: none; }
.col.slim { width: 12px; }
.slim.off .cb { color: #888; }
.sm { display: grid; place-items: center; }
.tools .big:first-child:not(:only-child) { width: 54px; }
.panel .col.labels { width: 78px; }
.line { display: flex; align-items: center; gap: 4px; padding-left: 2px; }
.dd { margin-left: 2px; }
.grid4 { display: grid; grid-template-columns: repeat(4, 36px); margin-right: 3px; }
.grid2 { display: grid; grid-template: 34px 34px / 36px 36px; }
.pairs { display: grid; grid-template: 34px 34px / 34px 12px; }
.panel.green .tools.row { justify-content: flex-end; padding-right: 8px; }
.panel.green .tools .big:first-child:not(:only-child) { width: 72px; }

.options { display: flex; align-items: center; flex: none; height: 27px; background: #dff0ce; padding: 0 8px 1px; white-space: nowrap; }
.mode { color: #a3ae98; width: 221px; border-right: 1px solid #9aa68d; margin-right: 14px; line-height: 20px; }
.pick { position: relative; display: flex; height: 20px; background: #fff; border: 1px solid #8c8c8c; margin-left: 3px; }
.pick select { appearance: none; border: 0; background: none; width: 100%; padding: 0 16px 0 4px; }
.pick svg { position: absolute; right: 4px; top: 7px; pointer-events: none; color: #555; }
.w84 { width: 84px; }
.w92 { width: 88px; }
.options .h { margin-left: 9px; }
.rule { width: 1px; height: 20px; background: #9aa68d; margin: 0 22px 0 9px; }
.rule.short { margin: 0 12px 0 10px; }
.obtn { height: 20px; background: #eff3ea; border: 1px solid #bbb; margin-left: 7px; }
.lock { width: 20px; display: grid; place-items: center; }
.apply { width: 45px; }
.options input { width: 112px; height: 20px; border: 1px solid #8c8c8c; margin-left: 3px; padding: 0 4px; }

.work { flex: 1; min-height: 0; display: flex; }
.side { width: 207px; flex: none; display: flex; flex-direction: column; background: #f0f0f0; border-right: 2px solid #c0c0c0; }
.phead { display: flex; justify-content: space-between; align-items: center; height: 20px; flex: none; padding: 0 5px 0 3px; white-space: nowrap; }
.phead.nav { height: 18px; border-top: 1px solid #c4c4c4; }
.type { display: flex; align-items: center; text-align: left; gap: 5px; height: 66px; flex: none; border: 1px solid #ccc; margin: 0 2px 0 1px; padding: 0 2px 0 3px; white-space: normal; }
.type span { flex: 1; }
.type .c { color: #222; }
.edit { display: flex; height: 23px; flex: none; align-items: center; }
.pick.gray { width: 119px; background: #e2e2e2; border-color: #aaa; margin-left: 1px; }
.pick.gray select { padding: 0 12px 0 3px; }
.edit-type { display: flex; align-items: center; gap: 4px; margin-left: 5px; padding-bottom: 2px; }
.props { display: flex; flex: none; }
table { border-collapse: collapse; table-layout: fixed; width: 187px; background: #fff; }
.c-name { width: 89px; }
.c-value { width: 87px; }
th { text-align: left; font-weight: 400; background: #dcdcdc; height: 16px; padding: 0 6px 0 3px; line-height: 15px; }
th svg { float: right; margin-top: 3px; }
td { height: 17px; padding: 0 2px; line-height: 16px; border: 1px dotted #b5b5b5; white-space: nowrap; }
td:first-child { padding: 0 0 0 7px; border-left: 0; }
tbody tr:first-child td.cur { border: 1px solid #222; }
tbody td:nth-child(3) { padding: 0; }
.vs { position: relative; width: 15px; margin-left: 1px; display: flex; flex-direction: column; align-items: center; justify-content: space-between; background: #f0f0f0; padding: 3px 0; flex: none; }
.vs i { position: absolute; left: 0; right: 0; background: #cdcdcd; }
.down { transform: rotate(180deg); }
.t1 { top: 16px; height: 19px; }
.t2 { top: 38%; height: 63px; }
.t3 { top: 49%; height: 14px; }
.foot { height: 25px; flex: none; display: flex; justify-content: space-between; align-items: flex-start; padding: 1px 5px 0 3px; }
.foot a { color: #2a6fb5; }
.foot button { width: 67px; height: 19px; background: #ccc; border: 1px solid #bcbcbc; color: #888; }
.browser { flex: 1; min-height: 0; display: flex; background: #fff; }
.tree { flex: 1; min-width: 0; overflow: hidden; white-space: nowrap; position: relative; line-height: 17px; }
.tree::before { content: ""; position: absolute; left: 8px; top: 0; bottom: 0; border-left: 1px dotted #aaa; }
.groups { position: relative; }
.groups::before { content: ""; position: absolute; left: 65px; top: 0; bottom: 42px; border-left: 1px dotted #aaa; }
.node { display: flex; align-items: center; height: 17px; position: relative; gap: 12px; }
.node i { width: 8px; height: 8px; flex: none; border: 1px solid #888; background: #fff; font: 8px/6px "Open Sans", sans-serif; text-align: center; }
.node::after { content: ""; position: absolute; width: 8px; top: 8px; border-top: 1px dotted #aaa; }
.n1 { padding-left: 42px; }
.n1::after { left: 52px; }
.n2 { padding-left: 61px; }
.n2::after { left: 71px; }
.leafs { position: relative; padding-left: 94px; }
.leafs::before { content: ""; position: absolute; left: 83px; top: 0; bottom: 8px; border-left: 1px dotted #aaa; }
.leafs li { height: 17px; display: flex; align-items: center; gap: 5px; position: relative; }
.leafs li::before { content: ""; position: absolute; left: -10px; width: 10px; top: 9px; border-top: 1px dotted #aaa; }
.leafs b { font-weight: 400; background: #dedede; flex: 1; overflow: hidden; }
.hs { display: flex; height: 17px; flex: none; align-items: center; background: #f0f0f0; padding: 0 17px 0 4px; }
.hs i { width: 98px; height: 13px; background: #cdcdcd; margin-left: 3px; }
.left { transform: rotate(-90deg); }
.right { transform: rotate(90deg); margin-left: auto; }

.views { flex: 1; min-width: 0; display: flex; flex-direction: column; }
.vtabs { display: flex; height: 20px; flex: none; }
.vtab { width: 120px; display: flex; align-items: center; gap: 6px; padding-left: 4px; }
.vtab.two { padding-left: 7px; gap: 7px; }
.vtab.active { background: #fff; width: 127px; font-weight: 600; color: #222; }
.vtab .xx { margin-left: auto; margin-right: 5px; }
.vtab.four { padding-left: 5px; }
.more { margin-left: auto; padding-right: 4px; }
.stage { flex: 1; min-height: 0; display: flex; }
.canvas { flex: 1; min-width: 0; position: relative; background: #fff; overflow: hidden; }
.drawing { width: 100%; height: 100%; }
.navbar { position: absolute; right: 0; top: 1px; width: 33px; height: 109px; border: 2px solid #c2c2c2; border-radius: 6px; background: #f3f3f3; display: flex; flex-direction: column; align-items: center; padding: 2px; color: #777; }
.nx { align-self: flex-end; }
.nx.end { margin-top: auto; }
.wheel { position: relative; margin-top: 9px; }
.wheel span { position: absolute; right: 0; bottom: -1px; font-size: 9px; line-height: 10px; color: #6a66b0; }
.nc { margin: 4px 0; }
.zoom { border-top: 1px solid #c8c8c8; padding: 6px 4px 0; }
.nc + .zoom + .nc { margin-top: 7px; }
.vs.wide { width: 16px; margin: 0; }
.viewbar { display: flex; height: 19px; flex: none; background: #f0f0f0; align-items: center; border-bottom: 1px solid #fff; }
.scale { margin-left: 24px; width: 32px; }
.vicons { display: flex; width: 216px; margin-left: 17px; }
.vicons .ib { flex: 1; width: auto; }
.hs.grow { flex: 1; padding: 0 4px 0 3px; }
.hs.grow i { width: 15px; margin-left: 48%; }
.grip { margin: 4px 3px 0 4px; }

.status { display: flex; align-items: center; height: 22px; flex: none; white-space: nowrap; padding-left: 1px; }
.hint { width: 309px; }
.s1, .s2 { height: 17px; border-color: #eee; }
.s1 { width: 190px; margin-left: 8px; }
.s2 { width: 192px; margin-left: 4px; color: #777; border-color: #aaa; }
.s1 svg, .s2 svg { top: 5px; color: #aaa; }
.edits { display: flex; gap: 4px; width: 46px; margin: 0 0 0 9px; }
.s1 + .edits + .ib { margin-right: 2px; }
.sel { margin-left: auto; margin-right: 67px; gap: 2px; }
.filter { display: flex; align-items: center; padding-left: 4px; }
.taskbar { height: 9px; flex: none; background: #111; }
```
